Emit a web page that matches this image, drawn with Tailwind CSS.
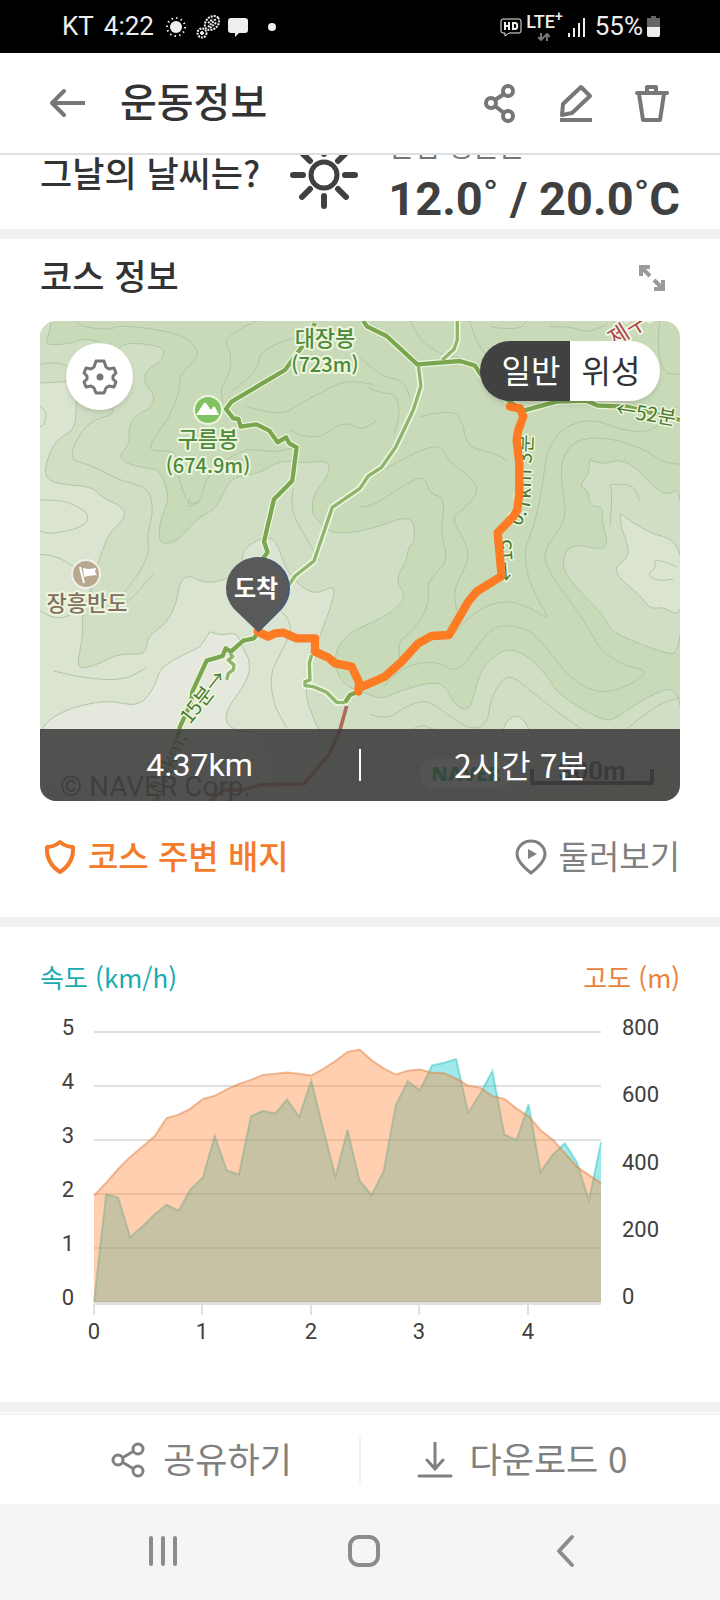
<!DOCTYPE html>
<html lang="ko">
<head>
    <meta charset="UTF-8">
    <meta name="viewport" content="width=device-width, initial-scale=1.0">
    <title>운동정보</title>
    <script src="https://cdn.jsdelivr.net/npm/@tailwindcss/browser@4"></script>
</head>
<body class="bg-white text-[#333] font-['Noto_Sans_CJK_KR',sans-serif]">
    <!-- Status bar -->
    <div class="h-[53px] bg-black text-[#eee] flex items-center justify-between pl-[62px] pr-[60px] font-[Roboto,sans-serif] text-[26px]">
        <div class="flex items-center">
            <span>KT</span>
            <span class="ml-2.5">4:22</span>
            <svg class="ml-3 w-5 h-5" viewBox="0 0 20 20" fill="currentColor">
                <circle cx="10" cy="10" r="6"/>
                <circle cx="10" cy="10" r="9" fill="none" stroke="currentColor" stroke-width="2" stroke-dasharray="1.4 3.3"/>
            </svg>
            <svg class="ml-2.5 w-6 h-6" viewBox="0 0 24 24" fill="none" stroke="currentColor">
                <ellipse cx="16" cy="8" rx="8" ry="6" transform="rotate(-42 16 8)" stroke-width="2" stroke-dasharray="2 1"/>
                <path d="M12 12L20 4M12 8l5-4M14 13l7-6" stroke-width="2" stroke-dasharray="2 1"/>
                <circle cx="6" cy="18" r="4.500" stroke-width="2" stroke-dasharray="2 1"/>
                <circle cx="6" cy="18" r="1.500" fill="currentColor"/>
            </svg>
            <svg class="ml-2 w-5 h-5" viewBox="0 0 20 20" fill="currentColor"><path d="M3 1h14a3 3 0 013 3v9a3 3 0 01-3 3h-6l-4 4v-4H3a3 3 0 01-3-3V4a3 3 0 013-3z"/></svg>
            <span class="ml-5 w-2 h-2 rounded-full bg-[#eee]"></span>
        </div>
        <div class="flex items-center">
            <svg class="w-[22px] h-5" viewBox="0 0 22 20" fill="none" stroke="currentColor">
                <path d="M3 2h16a2 2 0 012 2v10a2 2 0 01-2 2H9l-4 3v-3H3a2 2 0 01-2-2V4a2 2 0 012-2z"/>
                <path d="M5 5v8M5 9h4M9 5v8M13 6v6h2c3 0 3-6 0-6z" stroke-width="2"/>
            </svg>
            <div class="ml-1 flex flex-col items-center">
                <span class="text-[18px] leading-4 font-medium">LTE<sup class="text-sm">+</sup></span>
                <svg class="w-3 h-2" viewBox="0 0 12 8" fill="none" stroke="#777" stroke-width="2"><path d="M3 0v7M0 4l3 3 3-3M9 8V1M6 4l3-3 3 3"/></svg>
            </div>
            <svg class="ml-1 w-5 h-5" viewBox="0 0 20 20" fill="currentColor"><path d="M1 16h2v4H1zM6 11h2v9H6zM11 6h2v14h-2zM16 1h2v19h-2z"/></svg>
            <span class="ml-2">55%</span>
            <svg class="ml-1 w-[13px] h-[21px]" viewBox="0 0 13 21">
                <path d="M4 0h5v2h4v10H0V2h4z" fill="#666"/>
                <path d="M0 11h13v8a2 2 0 01-2 2H2a2 2 0 01-2-2z" fill="#eee"/>
            </svg>
        </div>
    </div>

    <!-- Header -->
    <header class="h-[102px] border-b-2 border-[#e0e0e0] flex items-center pl-12 pr-12 text-[#777]">
        <button type="button" aria-label="뒤로" class="w-10 h-10">
            <svg class="w-10 h-10" viewBox="0 0 40 40" fill="none" stroke="currentColor" stroke-width="4"><path d="M37 20H4"/><path d="M16 8L4 20l12 12" stroke-linecap="round" stroke-linejoin="round"/></svg>
        </button>
        <h1 class="ml-8 pb-1.5 grow text-[40px] leading-[60px] font-medium text-[#333]">운동정보</h1>
        <div class="flex gap-9">
            <button type="button" aria-label="공유" class="w-10 h-10">
                <svg class="w-10 h-10" viewBox="0 0 40 40" fill="none" stroke="currentColor" stroke-width="4"><circle cx="28" cy="8" r="5"/><circle cx="11" cy="20" r="5"/><circle cx="28" cy="33" r="5"/><path d="M15 17l9-6M15 23l9 7"/></svg>
            </button>
            <button type="button" aria-label="수정" class="w-10 h-10">
                <svg class="w-10 h-10" viewBox="0 0 40 40" fill="none" stroke="currentColor" stroke-width="4"><path d="M25 4l9 9-18 17-10 2 1-11z" stroke-linejoin="round"/><path d="M4 37h32"/></svg>
            </button>
            <button type="button" aria-label="삭제" class="w-10 h-10">
                <svg class="w-10 h-10" viewBox="0 0 40 40" fill="none" stroke="currentColor" stroke-width="4"><path d="M5 10h30" stroke-linecap="round"/><path d="M15 9V4h9v5M7 11l4 26h17l4-26" stroke-linejoin="round"/></svg>
            </button>
        </div>
    </header>

    <!-- Weather, partly scrolled under the header -->
    <section class="h-[74px] overflow-hidden flex flex-col justify-end px-10 text-[#404040]">
        <div class="flex items-center justify-between pb-1">
            <h2 class="pb-1.5 text-[35px] leading-[54px] font-medium text-[#333]">그날의 날씨는?</h2>
            <svg class="w-[68px] h-[68px] shrink-0" viewBox="0 0 68 68" fill="none" stroke="currentColor" stroke-width="6" stroke-linecap="round">
                <circle cx="34" cy="34" r="13" stroke-width="5"/>
                <path d="M34 3v10M34 55v10M3 34h10M55 34h10M12 12l8 8M48 48l8 8M12 56l8-8M48 20l8-8"/>
            </svg>
            <div>
                <p class="text-[28px] leading-10 text-[#777]">산림 평균은</p>
                <p class="pt-1 -mb-1 font-[Roboto,sans-serif] font-bold text-[47px] leading-[60px] whitespace-nowrap">12.0˚ / 20.0˚C</p>
            </div>
        </div>
    </section>
    <div class="h-2.5 bg-[#f1f2f4]"></div>

    <!-- Course -->
    <section class="px-10">
        <div class="h-[82px] pb-1 flex items-center justify-between">
            <h2 class="pb-1.5 text-[35px] leading-[54px] font-medium">코스 정보</h2>
            <button type="button" aria-label="지도 확대" class="mr-3 w-8 h-8 text-[#9a9a9a]">
                <svg class="w-8 h-8" viewBox="0 0 32 32" fill="none" stroke="currentColor" stroke-width="4"><path d="M5 14V5h9M5 5l9 9M27 18v9h-9M27 27l-9-9"/></svg>
            </button>
        </div>

        <div class="relative rounded-2xl overflow-hidden">
            <svg class="block w-full h-auto" viewBox="0 0 640 480">
                <rect width="640" height="480" fill="#c8dab8"/>
                <g transform="scale(.3333)" fill="none" stroke-linejoin="round">
                    <g id="terrain" stroke="#b1c5a5" stroke-width="3">
                        <!-- Terrain levels -->
                        <path fill="#d0dfc4" d="M-9-9L35-9L30 32L15 67L40 72L95 67L130 52L180 62L230 97L250 67L310 67L377 82L365 122L317 147L312 187L342 217L340 257L280 287L265 327L270 367L238 402L255 427L320 442L360 447L385 517L380 557L360 597L355 672L410 662L450 617L480 587L530 562L550 512L580 467L660 457L720 417L785 427L870 417L865 467L820 517L815 577L840 607L880 640L990 627L1120 577L1125 667L1105 677L1100 722L1065 777L1100 827L1060 872L990 907L920 940L880 1000L900 1090L990 1122L1030 1135L1070 1112L1190 1079L1225 1107L1240 1147L1275 1169L1295 1152L1310 1087L1335 1027L1400 979L1470 1007L1535 1082L1550 1117L1690 1202L1730 1192L1820 1127L1930 1087L1930 1450L-9 1450z"/>
                        <path fill="#d0dfc4" d="M1650 417L1690 432L1730 415L1780 432L1830 487L1880 527L1930 492L1930 1005L1860 992L1770 957L1710 927L1695 887L1610 802L1570 747L1570 702L1600 667L1710 692L1685 597L1690 557L1650 557L1645 507L1618 497L1645 457z"/>
                        <path fill="#dae4d0" d="M1740 577L1810 632L1930 662L1930 892L1870 857L1830 865L1805 827L1710 747L1775 707L1745 620z"/>
                        <path fill="#dae4d0" d="M-9 187L60 182L115 182L108 257L105 327L45 357L10 447L30 487L160 497L180 527L230 547L262 577L230 617L205 640L170 737L125 887L130 940L110 1037L135 1042L180 1027L240 997L320 1002L320 947L380 907L410 847L420 777L450 762L490 787L560 777L610 737L605 687L670 647L710 657L740 757L820 827L890 787L870 867L830 967L790 1100L820 1200L880 1300L860 1450L-9 1450z"/>
                        <path fill="#e5e9dd" d="M510 932L540 945L590 932L610 987L630 1017L625 1077L550 1177L570 1227L670 1237L710 1337L670 1450L-9 1450L-9 1230L60 1170L200 1135L300 1160L350 1087L360 1037L480 977z"/>
                        <path fill="#dae4d0" d="M1390 1224L1415 1167L1480 1224L1500 1450L1360 1450z"/>
                        <!-- Contour lines -->
                        <path d="M110 0L120 17L210 27L240 12L360 27L440 47L485 102L420 157L420 207L390 287L330 367L335 392L410 387L410 447L440 552L485 542L490 487L540 427L620 380L700 395L760 380"/>
                        <path d="M650 0L545 47L575 97L570 157L540 207L550 247"/>
                        <path d="M770 47L660 82L655 147L580 207"/>
                        <path d="M620 257L720 287L780 247L840 217L915 177L1000 190"/>
                        <path d="M750 327L820 367L915 297L960 330L1010 300"/>
                        <path d="M960 107L1020 167L1090 177L1110 227"/>
                        <path d="M980 197L1020 217L1070 217L1080 287L1060 340"/>
                        <path d="M960 557L990 562L1090 492L1155 462L1170 522L1217 527L1200 640L1228 720L1160 780L1170 850L1120 930L1075 960L1080 1020"/>
                        <path d="M980 477L1060 427L1200 362L1220 417L1330 497L1270 567L1230 590L1300 700L1240 800L1250 870"/>
                        <path d="M1140 287L1240 262L1270 307L1280 377L1360 397L1400 417"/>
                        <path d="M1910 257L1850 337L1740 327L1660 292L1570 317L1520 387L1510 487L1480 627L1450 687L1470 797L1537 907L1470 857L1390 837L1310 867L1240 940"/>
                        <path d="M1920 430L1870 427L1820 387L1700 347L1600 357L1560 427L1570 527L1580 597L1510 687L1520 747L1640 907L1680 987L1755 1037L1840 1052L1700 1127L1590 1077L1490 937L1420 912L1350 917L1255 1062L1190 1017L1090 1037L1030 1097"/>
                        <path d="M1110 0L1140 60L1200 100L1260 110"/>
                        <path d="M1290 0L1310 80L1380 130"/>
                        <path d="M1350 17L1380 23L1440 23L1460 0"/>
                        <path d="M1530 17L1600 17L1640 37L1700 10"/>
                        <path d="M1860 0L1850 60L1870 160L1920 160"/>
                        <path d="M0 130L60 120L100 150L190 160"/>
                        <path d="M0 257L20 267L15 310L0 317"/>
                        <path d="M230 187L200 240L230 280L140 300L80 415L150 430L240 480L330 500L340 580L320 640L330 700L270 800L200 860L190 880L260 850L340 760"/>
                        <path d="M0 537L60 537L100 550L150 580L130 620L30 640L0 630"/>
                        <path d="M0 700L60 700L160 790L150 850L60 900L0 870"/>
                        <path d="M40 1050L120 1070L250 1080L320 1040"/>
                        <path d="M450 530L440 560L460 552L480 540"/>
                        <path d="M760 500L750 560L780 620L840 720"/>
                        <path d="M700 850L770 900L720 1000L690 1060L700 1150L740 1220"/>
                        <path d="M990 1180L1040 1198L1090 1160L1160 1133L1220 1180L1300 1230L1345 1202L1350 1137L1400 1052L1470 1107L1560 1180L1680 1260"/>
                        <path d="M1910 737L1840 707L1850 740L1820 760L1850 780L1900 775"/>
                        <path d="M1710 617L1720 500L1700 490L1780 490L1800 540"/>
                        <path d="M1760 1224L1850 1150L1920 1130"/>
                        <path d="M1120 1224L1140 1210L1180 1224"/>
                    </g>
                    <!-- Trails -->
                    <g stroke="#edf6df" stroke-width="20">
                        <path d="M825 7L790 72L735 147L575 242L558 264L580 292L595 294L602 317L650 310L688 329L713 364L738 349L748 367L770 379L757 479L702 535L672 662L683 694L662 722L653 937L642 952L610 959L573 992L557 982L548 1005L500 1019L457 1112L453 1147L420 1217L400 1297L350 1440"/>
                        <path d="M970 0L982 17L1040 45L1132 130L1210 124L1260 120L1305 134L1320 157L1400 235L1450 269L1550 242L1640 239L1675 254L1760 257L1920 297M1252 0V57L1242 85L1207 117"/>
                        <path d="M1135 132L1143 195L1120 267L1067 379L1025 439L985 465L960 502L877 559L822 720L765 765L730 817M570 997L578 1007L565 1017L582 1032L580 1047L565 1057L560 1077M815 1002L808 1027L810 1077L795 1082V1094L820 1097L860 1114L890 1144L915 1145L930 1122L955 1112"/>
                    </g>
                    <g stroke="#7aa650" stroke-width="13">
                        <path d="M825 7L790 72L735 147L575 242L558 264L580 292L595 294L602 317L650 310L688 329L713 364L738 349L748 367L770 379L757 479L702 535L672 662L683 694L662 722L653 937L642 952L610 959L573 992L557 982L548 1005L500 1019L457 1112L453 1147L420 1217L400 1297L350 1440"/>
                        <path d="M970 0L982 17L1040 45L1132 130L1210 124L1260 120L1305 134L1320 157L1400 235L1450 269L1550 242L1640 239L1675 254L1760 257L1920 297M915 1145L930 1122L955 1112"/>
                    </g>
                    <g stroke="#8fb56d" stroke-width="10">
                        <path d="M1252 0V57L1242 85L1207 117M1135 132L1143 195L1120 267L1067 379L1025 439L985 465L960 502L877 559L822 720L765 765L730 817M570 997L578 1007L565 1017L582 1032L580 1047L565 1057L560 1077M815 1002L808 1027L810 1077L795 1082V1094L820 1097L860 1114L890 1144L915 1145"/>
                    </g>
                    <path stroke="#b0695c" stroke-width="11" d="M920 1155L900 1227L870 1297L792 1389L660 1392L610 1407H550L510 1440"/>
                </g>

                <!-- Place names -->
                <g class="font-['Noto_Sans_CJK_KR',sans-serif]" text-anchor="middle" font-size="22" stroke="#edf6df" stroke-width="4" stroke-linejoin="round" paint-order="stroke">
                    <g class="font-medium" fill="#4f8a3a">
                        <text x="285" y="25">대장봉</text>
                        <text x="285" y="51" font-size="20">(723m)</text>
                        <text x="168" y="126">구름봉</text>
                        <text x="168" y="152" font-size="20">(674.9m)</text>
                    </g>
                    <text class="font-medium" x="47" y="290" fill="#84705f">장흥반도</text>
                    <text transform="translate(574 26) rotate(-32)" text-anchor="start" fill="#b0404f">제구폭포</text>
                </g>
                <g class="font-['Noto_Sans_CJK_KR',sans-serif]" font-size="20" fill="#4c7a2f" stroke="#edf6df" stroke-width="3" stroke-linejoin="round" paint-order="stroke">
                    <text transform="translate(575 95) rotate(9)">←52분</text>
                    <text transform="translate(150 404) rotate(-52)">15분→</text>
                    <text transform="translate(122 474) rotate(-66)">0.2km,</text>
                    <text transform="translate(474 260) rotate(-94)">←15</text>
                    <text transform="translate(480 206) rotate(-62)">0.</text>
                    <text transform="translate(490 189) rotate(-88)">7km 3분</text>
                </g>

                <!-- Place pins -->
                <circle cx="168" cy="89" r="14" fill="#7fc25f" stroke="#edf6df" stroke-width="2"/>
                <path d="M156 94l8-12q1-1 2 0l5 7 2-3q1-1 2 0l4 8z" fill="#fff"/>
                <circle cx="46" cy="253" r="14" fill="#b9a890" stroke="#f4f1e8" stroke-width="2"/>
                <path d="M40 246l4 16" stroke="#fff" stroke-width="2"/>
                <path d="M43 247l5 1 8-1-1 4 2 3-9 1-4 1z" fill="#fff"/>

                <!-- Recorded route -->
                <path transform="scale(.3333)" fill="none" stroke="#fc7b23" stroke-width="25" stroke-linecap="round" stroke-linejoin="round" d="M1410 257L1440 262L1450 287L1435 327L1430 357L1438 427V517L1432 567L1420 587L1373 635L1385 765L1310 812L1285 842L1227 942L1175 945L1135 967L1085 1022L1035 1067L990 1087L955 1102L955 1112L958 1085L935 1037L885 1027L865 1010L825 992V952H770L730 935L705 937L685 947L653 932"/>
                <path d="M219 311l-23-23a31 31 0 1146 0z" fill="#41597a"/>
                <path d="M218 311l-24-23a31 31 0 1146 0z" fill="#595959"/>
                <text class="font-['Noto_Sans_CJK_KR',sans-serif] font-bold" x="216" y="276" text-anchor="middle" font-size="24" fill="#fff">도착</text>

                <!-- Map credits -->
                <rect x="380" y="438" width="92" height="29" rx="14" fill="#fff"/>
                <text class="font-['Open_Sans',sans-serif] font-extrabold" x="426" y="460" text-anchor="middle" font-size="20" fill="#03a04a">NAVER</text>
                <text class="font-[Roboto,sans-serif]" x="20" y="475" font-size="28" fill="#555">© NAVER Corp.</text>
                <text class="font-[Roboto,sans-serif] font-bold" x="552" y="459" text-anchor="middle" font-size="26" fill="#333">300m</text>
                <path d="M492 448v14h120v-14" fill="none" stroke="#333" stroke-width="4"/>
            </svg>

            <button type="button" aria-label="지도 설정" class="absolute left-[26px] top-[22px] w-[67px] h-[67px] rounded-full bg-white shadow-md flex items-center justify-center text-[#777]">
                <svg class="w-9 h-9" viewBox="0 0 36 36" fill="none" stroke="currentColor" stroke-width="3" stroke-linejoin="round">
                    <path d="M14 2h8l2 6 3 2 5-1 2 5-3 3v3l3 3-2 5-5-1-3 2-2 5h-8l-2-5-3-2-5 1-2-5 3-3v-3l-3-3 2-5 5 1 3-2z"/>
                    <circle cx="18" cy="18" r="3.500" fill="currentColor" stroke="none"/>
                </svg>
            </button>
            <div class="absolute right-5 top-5 w-[180px] h-[60px] rounded-full overflow-hidden shadow-md flex text-[32px] leading-[56px]">
                <button type="button" aria-pressed="true" class="w-1/2 pl-3 pb-1 bg-[#414141] text-white">일반</button>
                <button type="button" aria-pressed="false" class="w-1/2 pr-2 pb-1 bg-white">위성</button>
            </div>
            <div class="absolute inset-x-0 bottom-0 h-[72px] bg-[#3c3c3c]/88 text-white text-[32px] flex items-center text-center">
                <span class="flex-1 font-[Roboto,sans-serif]">4.37km</span>
                <span class="w-0.5 h-8 bg-white"></span>
                <span class="flex-1 pb-0.5">2시간 7분</span>
            </div>
        </div>

        <div class="h-[116px] pb-1 flex items-center justify-between text-[33px] leading-[48px]">
            <a href="#" class="flex items-center text-[#f47b2a] font-medium">
                <svg class="w-10 h-9 mr-2" viewBox="0 0 40 36" fill="none" stroke="currentColor" stroke-width="4" stroke-linejoin="round"><path d="M20 3q6 5 13 5 1 16-13 25Q6 24 7 8q7 0 13-5z"/></svg>
                <span class="pb-1">코스 주변 배지</span>
            </a>
            <a href="#" class="flex items-center text-[#808080]">
                <svg class="w-9 h-9 mr-2.5" viewBox="0 0 36 36" fill="none" stroke="currentColor" stroke-width="3" stroke-linejoin="round"><path d="M18 34Q4 23 4 15a14 13 0 0128 0q0 8-14 19z"/><path d="M15 10l9 5-9 5z" fill="currentColor" stroke="none"/></svg>
                <span class="pb-1">둘러보기</span>
            </a>
        </div>
    </section>
    <div class="h-2.5 bg-[#f1f2f4]"></div>

    <!-- Speed / altitude chart -->
    <section class="px-10 pt-[30px] pb-[52px]">
        <div class="flex justify-between text-[26px] leading-10 mb-[13px]">
            <span class="text-[#1aabb0]">속도 (km/h)</span>
            <span class="text-[#e8823a]">고도 (m)</span>
        </div>
        <svg class="block w-full h-auto font-[Roboto,sans-serif]" viewBox="0 0 640 340" font-size="22" fill="#404040">
            <path d="M54 22h507M54 76h507M54 130h507M54 184h507M54 238h507M54 292h507" stroke="#e0e0e0" stroke-width="2"/>
            <path d="M54 294h507M54 294v11M162 294v11M271 294v11M379 294v11M488 294v11" stroke="#e0e0e0" stroke-width="2" fill="none"/>
            <polygon id="speedArea" fill="#11c8ca" fill-opacity=".4"/>
            <polyline id="speedLine" fill="none" stroke="#11b8ba" stroke-opacity=".4" stroke-width="2"/>
            <polygon id="altitudeArea" fill="#ff8739" fill-opacity=".4"/>
            <polyline id="altitudeLine" fill="none" stroke="#e08040" stroke-opacity=".5" stroke-width="2"/>
            <g text-anchor="end">
                <text x="34" y="25">5</text>
                <text x="34" y="79">4</text>
                <text x="34" y="133">3</text>
                <text x="34" y="187">2</text>
                <text x="34" y="241">1</text>
                <text x="34" y="295">0</text>
            </g>
            <g>
                <text x="582" y="25">800</text>
                <text x="582" y="92">600</text>
                <text x="582" y="160">400</text>
                <text x="582" y="227">200</text>
                <text x="582" y="294">0</text>
            </g>
            <g text-anchor="middle">
                <text x="54" y="329">0</text>
                <text x="162" y="329">1</text>
                <text x="271" y="329">2</text>
                <text x="379" y="329">3</text>
                <text x="488" y="329">4</text>
            </g>
        </svg>
    </section>
    <div class="h-2.5 bg-[#f1f2f4]"></div>

    <!-- Bottom actions -->
    <div class="mt-px h-[91px] border-t-2 border-[#f1f2f4] flex items-center text-[35px] leading-[52px] text-[#808080]">
        <button type="button" class="w-1/2 flex items-center justify-center pl-11">
            <svg class="w-9 h-9 mr-4" viewBox="0 0 36 36" fill="none" stroke="currentColor" stroke-width="3"><circle cx="27" cy="7" r="5"/><circle cx="7" cy="18" r="5"/><circle cx="27" cy="29" r="5"/><path d="M11 16l12-7M11 20l12 7"/></svg>
            <span class="pb-1">공유하기</span>
        </button>
        <span class="w-0.5 h-[46px] bg-[#f1f2f4]"></span>
        <button type="button" class="w-1/2 flex items-center justify-center pr-9 whitespace-nowrap">
            <svg class="w-9 h-9 mr-4" viewBox="0 0 36 36" fill="none" stroke="currentColor" stroke-width="3" stroke-linecap="round"><path d="M18 1v26M10 18l8 9 8-9M2 34h32"/></svg>
            <span class="pb-1">다운로드 0</span>
        </button>
    </div>

    <!-- System navigation -->
    <nav class="h-24 bg-[#f5f5f5] flex items-center justify-between pl-[142px] pr-[134px] pb-0.5 text-[#8c8c8c]">
        <button type="button" aria-label="최근 앱" class="w-10 h-10">
            <svg class="w-10 h-10" viewBox="0 0 40 40" fill="none" stroke="currentColor" stroke-width="4" stroke-linecap="round"><path d="M9 7v26M21 7v26M33 7v26"/></svg>
        </button>
        <button type="button" aria-label="홈" class="w-10 h-10">
            <svg class="w-10 h-10" viewBox="0 0 40 40" fill="none" stroke="currentColor" stroke-width="4"><rect x="6" y="6" width="28" height="28" rx="9"/></svg>
        </button>
        <button type="button" aria-label="이전" class="w-10 h-10">
            <svg class="w-10 h-10" viewBox="0 0 40 40" fill="none" stroke="currentColor" stroke-width="4" stroke-linecap="round" stroke-linejoin="round"><path d="M26 6L13 20l13 14"/></svg>
        </button>
    </nav>

    <script>
        // One sample every 1/9 km
        const speed = [0, 1.99, 1.94, 1.2, 1.4, 1.62, 1.8, 1.69, 2.09, 2.3, 3.08, 2.44, 2.36, 3.44, 3.54, 3.49, 3.75, 3.43, 4.1, 3.19, 2.33, 3.19, 2.25, 1.98, 2.43, 3.65, 4.09, 3.92, 4.38, 4.43, 4.5, 3.51, 3.86, 4.28, 3.1, 3, 3.66, 2.41, 2.73, 2.94, 2.59, 1.89, 2.96];
        const altitude = [315, 353, 394, 430, 460, 490, 544, 555, 573, 601, 611, 630, 646, 658, 673, 676, 680, 676, 671, 691, 714, 741, 748, 716, 692, 674, 685, 689, 679, 678, 662, 641, 635, 610, 602, 573, 550, 509, 481, 441, 401, 376, 352];

        function draw(name, values, max) {
            const step = 507 / (values.length - 1);
            const points = values.map((v, i) => `${54 + i * step},${292 - v / max * 270}`).join(' ');
            document.getElementById(name + 'Line').setAttribute('points', points);
            document.getElementById(name + 'Area').setAttribute('points', `54,292 ${points} 561,292`);
        }

        draw('speed', speed, 5);
        draw('altitude', altitude, 800);

        // Round the terrain corners with curves through the segment midpoints
        document.querySelectorAll('#terrain path').forEach(path => {
            const n = path.getAttribute('d').match(/-?\d+/g).map(Number);
            const closed = path.getAttribute('d').endsWith('z');
            let d = `M${n[0]} ${n[1]}`;
            for (let i = 2; i < n.length - 2; i += 2) {
                d += `Q${n[i]} ${n[i + 1]} ${(n[i] + n[i + 2]) / 2} ${(n[i + 1] + n[i + 3]) / 2}`;
            }
            d += `L${n[n.length - 2]} ${n[n.length - 1]}`;
            path.setAttribute('d', closed ? d + 'z' : d);
        });
    </script>
</body>
</html>
